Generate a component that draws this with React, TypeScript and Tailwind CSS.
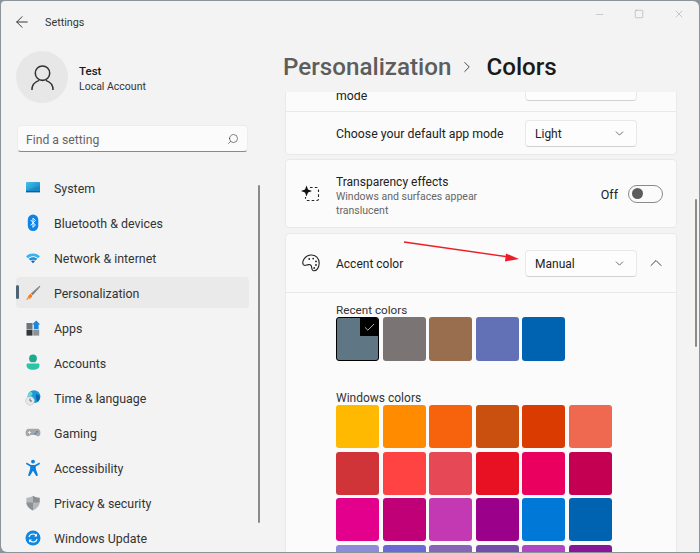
import React from "react";
import { ChevronDown, ChevronUp, ChevronRight, ArrowLeft, Minus, Square, X, Search, Check } from "lucide-react";

const SystemIcon = () => (
  <svg width="16" height="16" viewBox="0 0 16 16">
    <defs>
      <linearGradient id="sys" x1="0" y1="0" x2="1" y2="1">
        <stop offset="0" stopColor="#45c3ea" />
        <stop offset="1" stopColor="#0f7cc4" />
      </linearGradient>
    </defs>
    <rect x="1" y="2" width="14" height="10" rx="0.8" fill="url(#sys)" />
    <path d="M1 10.5 L15 6 V12 H1Z" fill="#1587c9" opacity="0.7" />
    <rect x="1" y="11" width="14" height="1.4" fill="#1d5a86" />
  </svg>
);

const BluetoothIcon = () => (
  <svg width="16" height="18" viewBox="0 0 16 18">
    <rect x="2.8" y="0.5" width="10.5" height="16.5" rx="5.2" fill="#0a84e8" />
    <path d="M5.6 5.9 L10.4 11 L8 13.4 V4 L10.4 6.4 L5.6 11.4" fill="none" stroke="#fff" strokeWidth="1" />
  </svg>
);

const WifiIcon = () => (
  <svg width="16" height="16" viewBox="0 0 16 16">
    <path d="M1 6.2 C5 2.6 11 2.6 15 6.2 L13 8.2 C9.8 5.6 6.2 5.6 3 8.2Z" fill="#36b3f0" />
    <path d="M3.6 8.8 C6.4 6.6 9.6 6.6 12.4 8.8 L10.6 10.6 C8.9 9.4 7.1 9.4 5.4 10.6Z" fill="#1a8fe3" />
    <path d="M6 11.1 C7.2 10.3 8.8 10.3 10 11.1 L8 13.2Z" fill="#0b5fb8" />
  </svg>
);

const BrushIcon = () => (
  <svg width="16" height="16" viewBox="0 0 16 16">
    <path d="M14.6 0.8 L15.4 1.6 L7.8 10.2 L5.8 8.4Z" fill="#7f8487" />
    <path d="M5.4 8.8 L7.4 10.7 C6.8 13 4.2 14.6 1 14.6 C2.6 13.4 2.8 10.6 5.4 8.8Z" fill="#f7781f" />
    <path d="M3.4 12 L5.4 12.6 C4.4 13.8 2.8 14.4 1 14.6 C2 14 2.8 13 3.4 12Z" fill="#fbb03b" />
  </svg>
);

const AppsIcon = () => (
  <svg width="16" height="16" viewBox="0 0 16 16">
    <rect x="1.5" y="3" width="6" height="6" fill="#6f7477" />
    <rect x="1.5" y="9.6" width="6" height="6" fill="#33373a" />
    <rect x="8.2" y="9.6" width="6" height="6" fill="#8d9296" />
    <path d="M11.2 0.6 L15.2 4.6 L13.6 4.6 V9 H8.8 V4.6 H7.2Z" fill="#1a86dc" />
  </svg>
);

const AccountsIcon = () => (
  <svg width="16" height="18" viewBox="0 0 16 18">
    <circle cx="8" cy="4.4" r="3.9" fill="#1fa98f" />
    <path d="M1.5 11 C1.5 9.8 2.4 9.4 3.2 9.4 H12.8 C13.6 9.4 14.5 9.8 14.5 11 C14.5 14.4 11.6 15.8 8 15.8 C4.4 15.8 1.5 14.4 1.5 11Z" fill="#2cc4a6" />
  </svg>
);

const TimeIcon = () => (
  <svg width="16" height="16" viewBox="0 0 16 16">
    <circle cx="9" cy="6.6" r="6.4" fill="#1a9ad6" />
    <path d="M5.4 1.4 C8 2.4 8.2 4.6 6.4 5.6 C5.2 6.4 4 5.8 3 6.6 C2.8 4.4 3.6 2.6 5.4 1.4Z" fill="#5fdcd4" />
    <path d="M11 4 L14.6 5.4 C15.4 8 14.4 10.4 12.4 11.8 L11 8.6Z" fill="#0e62b4" />
    <circle cx="5" cy="10.8" r="4.4" fill="#e6e7e8" stroke="#b9bcbf" strokeWidth="0.5" />
    <path d="M5 8.4 V11 H7" fill="none" stroke="#4b4f52" strokeWidth="0.8" />
  </svg>
);

const GamingIcon = () => (
  <svg width="16" height="16" viewBox="0 0 16 16">
    <path d="M3.6 3.8 H12.4 C14.4 3.8 15.4 5.6 15.4 8 C15.4 10.4 14.2 11.6 12.6 11.2 C11.4 10.9 11 10 10 10 H6 C5 10 4.6 10.9 3.4 11.2 C1.8 11.6 0.6 10.4 0.6 8 C0.6 5.6 1.6 3.8 3.6 3.8Z" fill="#a4a8ac" />
    <path d="M3 7.5 H6 M4.5 6 V9" stroke="#eceef0" strokeWidth="0.9" />
    <circle cx="10.4" cy="8.6" r="0.9" fill="#1f7fd6" />
    <circle cx="12" cy="6.8" r="0.9" fill="#1f7fd6" />
  </svg>
);

const AccessibilityIcon = () => (
  <svg width="16" height="18" viewBox="0 0 16 18">
    <circle cx="8" cy="2.6" r="1.9" fill="#0a7fdc" />
    <path d="M1.6 3.6 L6 6 H10 L14.4 3.6 L15 5 L10.8 7.6 V10 L13 16.4 L11.2 17 L8 11.8 L4.8 17 L3 16.4 L5.2 10 V7.6 L1 5Z" fill="#0a7fdc" />
  </svg>
);

const ShieldIcon = () => (
  <svg width="16" height="16" viewBox="0 0 16 16">
    <path d="M8 0.8 C10 2.2 12.4 2.8 14.6 2.8 V7.6 C14.6 11.2 11.8 13.8 8 15.4 C4.2 13.8 1.4 11.2 1.4 7.6 V2.8 C3.6 2.8 6 2.2 8 0.8Z" fill="#b4b8bb" />
    <path d="M8 0.8 C10 2.2 12.4 2.8 14.6 2.8 V7.6 H8Z" fill="#8b9094" />
    <path d="M8 7.6 H1.4 C1.4 11.2 4.2 13.8 8 15.4Z" fill="#8b9094" />
  </svg>
);

const UpdateIcon = () => (
  <svg width="16" height="16" viewBox="0 0 16 16">
    <circle cx="8" cy="8" r="7.5" fill="#0f86e0" />
    <path d="M4 7.2 C4.4 5.2 6 4 8 4 C9.2 4 10.2 4.5 11 5.2 M12 8.8 C11.6 10.8 10 12 8 12 C6.8 12 5.8 11.5 5 10.8" fill="none" stroke="#fff" strokeWidth="1.2" />
    <path d="M12 3.6 V6.4 H9.2Z M4 12.4 V9.6 H6.8Z" fill="#fff" />
  </svg>
);

const TransparencyIcon = () => (
  <svg width="20" height="20" viewBox="0 0 20 20">
    <path d="M5.5 2 L7 6 L11 7.5 L7 9 L5.5 13 L4 9 L0 7.5 L4 6Z" fill="#111" transform="translate(0 -0.5)" />
    <path d="M9 3.5 H16 C16.8 3.5 17.5 4.2 17.5 5 V15 C17.5 15.8 16.8 16.5 16 16.5 H6 C5.2 16.5 4.5 15.8 4.5 15 V13" fill="none" stroke="#222" strokeWidth="1.1" strokeDasharray="2.6 2.2" />
  </svg>
);

const PaletteIcon = () => (
  <svg width="20" height="20" viewBox="0 0 20 20" fill="none" stroke="#222" strokeWidth="1.1">
    <path d="M9.6 2 C14.6 1.6 18.4 5.2 18.2 10.6 C18 14.8 15.6 18 12.8 17.8 C10.8 17.6 10.8 15.8 10.6 14 C10.4 12.2 9.2 11.2 7.4 11.6 C5.4 12 3.2 13.4 2.2 11.6 C0.6 8.4 4 2.4 9.6 2Z" />
    <circle cx="8.2" cy="6" r="0.9" fill="#222" stroke="none" />
    <circle cx="12.2" cy="5.6" r="0.9" fill="#222" stroke="none" />
    <circle cx="15" cy="8.4" r="0.9" fill="#222" stroke="none" />
    <circle cx="15" cy="12" r="0.9" fill="#222" stroke="none" />
    <circle cx="13.2" cy="15" r="0.9" fill="#222" stroke="none" />
  </svg>
);

const navItems = [
  { label: "System", icon: <SystemIcon /> },
  { label: "Bluetooth & devices", icon: <BluetoothIcon /> },
  { label: "Network & internet", icon: <WifiIcon /> },
  { label: "Personalization", icon: <BrushIcon />, active: true },
  { label: "Apps", icon: <AppsIcon /> },
  { label: "Accounts", icon: <AccountsIcon /> },
  { label: "Time & language", icon: <TimeIcon /> },
  { label: "Gaming", icon: <GamingIcon /> },
  { label: "Accessibility", icon: <AccessibilityIcon /> },
  { label: "Privacy & security", icon: <ShieldIcon /> },
  { label: "Windows Update", icon: <UpdateIcon /> },
];

const recentColors = ["#5f7784", "#7a7574", "#986e4f", "#6270b5", "#0063b1"];

const windowsColors = [
  "#ffb900", "#ff8c00", "#f7630c", "#ca5010", "#da3b01", "#ef6950",
  "#d13438", "#ff4343", "#e74856", "#e81123", "#ea005e", "#c30052",
  "#e3008c", "#bf0077", "#c239b3", "#9a0089", "#0078d7", "#0063b1",
  "#8e8cd8", "#6b69d6", "#8764b8", "#744da9", "#b146c2", "#881798",
];

const Dropdown = ({ label }: { label?: string }) => (
  <div className="ml-auto flex h-[27px] w-[112px] shrink-0 items-center justify-between rounded-[4px] border border-[#e8e8e8] border-b-[#d2d2d2] bg-[#fdfdfd] pl-[9px] pr-[10px] text-[12px] text-[#222]">
    <span className="pt-[2px]">{label}</span>
    <ChevronDown size={13} strokeWidth={1.4} className="text-[#444]" />
  </div>
);

export default function App() {
  return (
    <div className="h-[553px] w-[700px] overflow-hidden bg-[#8c949a] p-px font-['Roboto',sans-serif]">
      <div className="flex h-full overflow-hidden rounded-tl-[4px] rounded-tr-[6px] rounded-bl-[6px] bg-[#f3f3f3]">
        <aside className="relative w-[280px] shrink-0">
          <div className="flex h-[42px] items-center pl-[12px] text-[10.8px] text-[#333]">
            <ArrowLeft size={18} strokeWidth={1.3} />
            <span className="ml-[14px] pt-[2px]">Settings</span>
          </div>
          <div className="ml-[15px] mt-[8px] flex items-center gap-[11px]">
            <div className="flex h-[52px] w-[52px] items-center justify-center rounded-full bg-[#e7e7e7]">
              <svg width="25" height="27" viewBox="0 0 26 28" fill="none" stroke="#333" strokeWidth="1.6">
                <circle cx="13" cy="9.5" r="7.5" />
                <path d="M2 27 C2 21.5 6 18.2 9.5 17 M24 27 C24 21.5 20 18.2 16.5 17" />
              </svg>
            </div>
            <div className="flex flex-col pt-[2px]">
              <span className="text-[11.5px] font-medium leading-[16px] text-[#1a1a1a]">Test</span>
              <span className="text-[10.5px] leading-[15px] text-[#333]">Local Account</span>
            </div>
          </div>
          <div className="ml-[16px] mt-[22px] flex h-[27px] w-[231px] items-center justify-between rounded-[4px] border border-[#ececec] border-b-[#8a8a8a] bg-[#fbfbfb] pl-[8px] pr-[8px] text-[12.2px] text-[#666]">
            <span className="pt-[3px]">Find a setting</span>
            <Search size={12} strokeWidth={1.2} className="-scale-x-100 text-[#333]" />
          </div>
          <nav className="ml-[15px] mt-[20px] flex w-[233px] flex-col gap-[4px]">
            {navItems.map((item) => (
              <div
                key={item.label}
                className={
                  item.active
                    ? "relative flex h-[31px] items-center gap-[13px] rounded-[4px] bg-[#eaeaea] pl-[9px] text-[12.4px] text-[#333]"
                    : "relative flex h-[31px] items-center gap-[13px] rounded-[4px] pl-[9px] text-[12.4px] text-[#333]"
                }
              >
                {item.active && (
                  <span className="absolute left-0 top-[8px] h-[14px] w-[3px] rounded-full bg-[#4e6472]" />
                )}
                <span className="flex w-[16px] shrink-0 items-center justify-center">{item.icon}</span>
                <span className="pt-[3px]">{item.label}</span>
              </div>
            ))}
          </nav>
          <div className="absolute left-[257px] top-[184px] h-[338px] w-[2px] rounded-full bg-[#8a8a8a]" />
        </aside>
        <main className="relative flex min-w-0 flex-1 flex-col">
          <div className="flex h-[26px] shrink-0 items-center justify-end text-[#9b9b9b]">
            <span className="flex w-10 justify-center"><Minus size={11} strokeWidth={1} /></span>
            <span className="flex w-10 justify-center"><Square size={10} strokeWidth={1.2} /></span>
            <span className="flex w-10 justify-center"><X size={12} strokeWidth={1} /></span>
          </div>
          <div className="flex h-[65px] shrink-0 items-center pl-[2px] pt-[15px] text-[24.2px] font-medium">
            <span className="text-[#5d5d5d]">Personalization</span>
            <ChevronRight size={18} strokeWidth={1.3} className="ml-[7px] mr-[10px] text-[#444]" />
            <span className="text-[#1a1a1a]">Colors</span>
          </div>
          <div className="min-h-0 flex-1 overflow-hidden">
            <div className="-mt-[30px] ml-[4px] flex w-[392px] flex-col">
              <section className="rounded-[4px] border border-[#e9e9e9] bg-[#fbfbfb] text-[12.3px] text-[#222]">
                <div className="flex h-[48px] items-center pl-[50px] pr-[39px]">
                  <span className="mb-[12px] self-end leading-[6px]">mode</span>
                  <Dropdown />
                </div>
                <div className="flex h-[43px] items-center border-t border-[#e9e9e9] pl-[50px] pr-[39px]">
                  <span className="pt-[2px]">Choose your default app mode</span>
                  <Dropdown label="Light" />
                </div>
              </section>
              <section className="mt-[4px] flex h-[69px] items-center rounded-[4px] border border-[#e9e9e9] bg-[#fbfbfb] pl-[15px] pr-[13px]">
                <TransparencyIcon />
                <div className="ml-[15px] w-[170px] pt-[4px]">
                  <div className="text-[12px] leading-[16px] text-[#222]">Transparency effects</div>
                  <div className="text-[10.5px] leading-[14px] text-[#666]">Windows and surfaces appear translucent</div>
                </div>
                <span className="ml-auto pt-[4px] text-[12.5px] text-[#222]">Off</span>
                <div className="ml-[10px] flex h-[18px] w-[35px] items-center rounded-full border border-[#8a8a8a] pl-[3px]">
                  <span className="h-[11px] w-[11px] rounded-full bg-[#5c5c5c]" />
                </div>
              </section>
              <section className="relative mt-[5px] rounded-[4px] border border-[#e9e9e9] bg-[#fbfbfb]">
                <div className="flex h-[59px] items-center border-b border-[#e9e9e9] pl-[15px] pr-[10px] text-[12px] text-[#222]">
                  <PaletteIcon />
                  <span className="ml-[15px] pt-[2px]">Accent color</span>
                  <div className="ml-auto flex items-center gap-[9px]">
                    <Dropdown label="Manual" />
                    <ChevronUp size={20} strokeWidth={1.1} className="text-[#333]" />
                  </div>
                </div>
                <div className="pl-[50px] pt-[10px]">
                  <div className="text-[11.7px] leading-[14px] text-[#333]">Recent colors</div>
                  <div className="flex gap-[3.5px]">
                    {recentColors.map((c, i) => (
                      <div
                        key={c}
                        className={
                          i === 0
                            ? "relative h-[44px] w-[43px] overflow-hidden rounded-[3px] border-[1.5px] border-black"
                            : "h-[44px] w-[43px] rounded-[3px]"
                        }
                        style={{ backgroundColor: c }}
                      >
                        {i === 0 && (
                          <span className="absolute right-0 top-0 flex h-[18px] w-[18px] items-center justify-center bg-black">
                            <Check size={13} strokeWidth={1.3} className="text-white" />
                          </span>
                        )}
                      </div>
                    ))}
                  </div>
                  <div className="mt-[29px] pt-[1px] text-[12px] leading-[14px] text-[#333]">Windows colors</div>
                  <div className="grid grid-cols-[repeat(6,43px)] gap-[3.5px]">
                    {windowsColors.map((c) => (
                      <div key={c + "s"} className="h-[43px] rounded-[3px]" style={{ backgroundColor: c }} />
                    ))}
                  </div>
                </div>
                <svg className="absolute left-[117px] top-[7px]" width="120" height="22" viewBox="0 0 120 22">
                  <path d="M1 1 L106 16" stroke="#ee1c25" strokeWidth="1.4" />
                  <path d="M116 18 L103 12.5 L102 20.5Z" fill="#ee1c25" />
                </svg>
              </section>
            </div>
          </div>
          <div className="absolute left-[414px] top-[198px] h-[148px] w-[2px] rounded-full bg-[#8a8a8a]" />
        </main>
      </div>
    </div>
  );
}
